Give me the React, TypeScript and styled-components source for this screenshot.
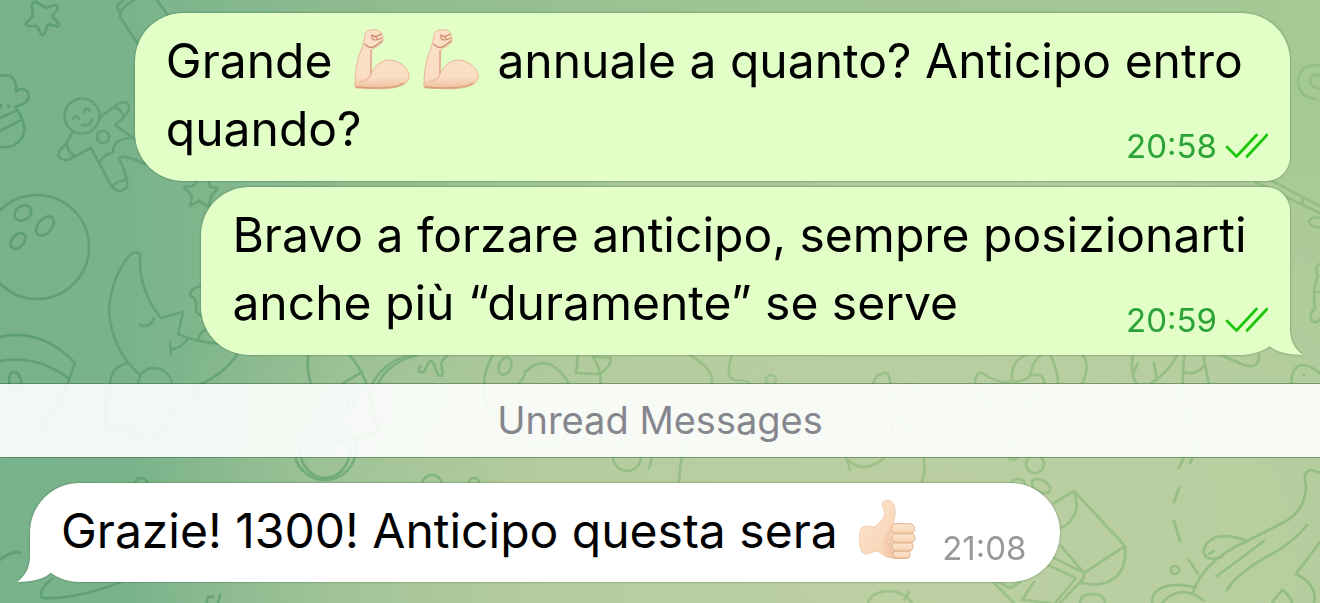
import React from "react";
import styled, { createGlobalStyle } from "styled-components";

const GlobalStyle = createGlobalStyle`
  * { box-sizing: border-box; }
  body { margin: 0; font-family: Inter, "Liberation Sans", sans-serif; }
`;

const Chat = styled.main`
  position: relative;
  min-height: 100vh;
  overflow: hidden;
  background:
    radial-gradient(ellipse 58% 92% at 68% 94%, rgba(190, 208, 163, 0.95), rgba(190, 208, 163, 0.72) 50%, rgba(190, 208, 163, 0) 100%),
    linear-gradient(90deg, #78b28b 0%, #7ab38b 10%, #8ebb8f 26%, #9cc392 50%, #a3c794 80%, #a5c995 100%);
`;

const Wallpaper = styled.svg`
  position: absolute;
  inset: 0;
  width: 100%;
  height: 100%;
  fill: none;
  stroke-width: 2.7;
  stroke-linecap: round;
  stroke-linejoin: round;
`;

const Thread = styled.div`
  position: relative;
  display: flex;
  flex-direction: column;
  padding: 13px 0 20px;
`;

const Group = styled.section<{ $side: "in" | "out" }>`
  display: flex;
  flex-direction: column;
  align-items: ${(p) => (p.$side === "out" ? "flex-end" : "flex-start")};
  gap: 6px;
  padding: 0 30px;
`;

const Bubble = styled.article<{ $corners: string }>`
  position: relative;
  border-radius: ${(p) => p.$corners};
  filter: drop-shadow(0 0 1px rgba(40, 90, 50, 0.6));
`;

const OutBubble = styled(Bubble)<{ $max: string }>`
  width: ${(p) => p.$max};
  padding: 14px 22px 18px 31px;
  background: #e1ffc7;
`;

const InBubble = styled(Bubble)`
  display: flex;
  align-items: flex-end;
  gap: 22px;
  padding: 14px 34px 17px 31px;
  background: #fff;
`;

const Message = styled.p`
  margin: 0;
  font-size: 48px;
  line-height: 68px;
  color: #000;
`;

const Meta = styled.span<{ $color: string }>`
  display: flex;
  align-items: center;
  gap: 8px;
  font-size: 33px;
  line-height: 34px;
  color: ${(p) => p.$color};
`;

const FloatingMeta = styled(Meta)`
  float: right;
  margin-top: 34px;
`;

const Ticks = styled.svg`
  width: 43px;
  height: 26px;
  fill: none;
  stroke: #1bc60c;
  stroke-width: 2.7;
  stroke-linecap: round;
  stroke-linejoin: round;
`;

const Tail = styled.svg<{ $side: "in" | "out" }>`
  position: absolute;
  bottom: 0;
  ${(p) => (p.$side === "out" ? "right: -14px;" : "left: -14px; transform: scaleX(-1);")}
  width: 62px;
  height: 48px;
  fill: ${(p) => (p.$side === "out" ? "#e1ffc7" : "#fff")};
`;

const Emoji = styled.svg`
  width: 58px;
  height: 62px;
  margin: 0 4px 0 7px;
  vertical-align: -12px;
`;

const UnreadBar = styled.h2`
  margin: 28px 0 25px;
  border: solid rgba(70, 115, 75, 0.6);
  border-width: 1px 0;
  background: rgba(255, 255, 255, 0.9);
  background-clip: padding-box;
  text-align: center;
  font-size: 38px;
  font-weight: 400;
  line-height: 73px;
  color: #86868e;
`;

function BubbleTail({ side }: { side: "in" | "out" }) {
  return (
    <Tail $side={side} viewBox="0 0 62 48" aria-hidden="true">
      <path d="M30 0H48V22C48 34 53 42 61 48C48 48 36 46 27.5 39.3Z" />
    </Tail>
  );
}

function Flexed() {
  return (
    <Emoji viewBox="0 0 58 62" role="img" aria-label="flexed biceps">
      <defs>
        <linearGradient id="arm" x1="0" y1="0" x2="0" y2="1">
          <stop offset="0" stopColor="#fbdfc6" />
          <stop offset="0.8" stopColor="#fadec4" />
          <stop offset="1" stopColor="#efbf9f" />
        </linearGradient>
      </defs>
      <path
        d="M12 8C12 4 14 2 19 2C22 1 27 2 28 5C30 6 29 9 30 11C31 14 26 18 21 20C18 21 19 23 18.500 27C18 34 18 41 17.500 47.500C21 39 27 32 36 32C46 32 56 40 56.300 48C56 55 49 58 42 59.500C34 61.500 16 60.500 4 60C2 60 1.500 58 2 55C2 47 3 39 5 31C7 24 10 19 10.500 15Z"
        fill="url(#arm)" stroke="#e5b090" strokeWidth="0.9" />
      <path d="M17.500 47.500C15 51 11 53 7 54" fill="none" stroke="#efc1a4" strokeWidth="1.500" />
      <path d="M18 22V45" fill="none" stroke="#e0a685" strokeWidth="1.400" />
      <path d="M19 7C22 10 25 8 28 6M19 7C18 10 20 12 22 12C25 12 27 11 29 10M22 8L24 11M12 16C15 20 19 20 22 18L29 13" fill="none" stroke="#c98a68" strokeWidth="1.200" strokeLinecap="round" />
      <path d="M3 59C20 60.500 42 61 51 55" fill="none" stroke="#d99b78" strokeWidth="1.500" />
    </Emoji>
  );
}

function ThumbsUp() {
  return (
    <Emoji viewBox="0 0 60 62" role="img" aria-label="thumbs up">
      <defs>
        <linearGradient id="hand" x1="0" y1="0" x2="1" y2="1">
          <stop offset="0.2" stopColor="#fce2c8" />
          <stop offset="0.7" stopColor="#f8d5b8" />
          <stop offset="1" stopColor="#ecb998" />
        </linearGradient>
        <linearGradient id="finger" x1="0" y1="0" x2="0" y2="1">
          <stop offset="0" stopColor="#fce4cd" />
          <stop offset="0.7" stopColor="#f9dabd" />
          <stop offset="1" stopColor="#eebf9c" />
        </linearGradient>
      </defs>
      <path
        d="M25 5C25 2 28 1 31 1C37 2 39 9 38.500 15C38 20 36 23 38 27L48 30V61C42 62 35 61.500 30 60C25 58 23 54 18 54C15 54 12 57 8 57C3 57 1 48 1.500 39C1.800 31 4 28 8 28C12 28 15 30 19 28C22 24 27 21 27.500 15C27.600 11 25 9 25 5Z"
        fill="url(#hand)" stroke="#edc1a2" strokeWidth="0.7" />
      <path d="M37 28C31 34 34 42 35 49C35 55 37 58 39 60C32 58 28 53 26 47C28 38 31 30 37 28Z" fill="#f2c5a6" opacity="0.6" />
      <g fill="url(#finger)" stroke="#dfa886" strokeWidth="0.9">
        <rect x="36" y="53" width="18" height="8.500" rx="4" />
        <rect x="35" y="44.500" width="22" height="9.500" rx="4.500" />
        <rect x="35" y="35" width="24" height="10.500" rx="5" />
        <rect x="34" y="25.500" width="24.500" height="10.500" rx="5" />
      </g>
    </Emoji>
  );
}

function DoubleCheck() {
  return (
    <Ticks viewBox="0 0 43 26" role="img" aria-label="Read">
      <path d="M2 14L11.500 23.500L31.500 2M22 23.500L42 2" />
    </Ticks>
  );
}

const doodles = [
  // star and tumbler
  "M36 2L46 8L54 5Q59 5 57 10L52 16L59 24Q60 27 56 26L48 24L45 33Q42 37 40 32L37 26L28 26Q24 25 27 22L33 16L32 5Q33 1 36 2Z",
  "M124 0Q115 6 118 9L121 13M134 0Q118 9 120 17L140 47M157 0L170 18",
  // snowman
  "M0 76Q14 72 16 86L16 92Q21 86 27 91Q32 99 23 104L15 107Q29 126 22 138Q14 149 0 147M0 118L18 110M0 131L21 120M1 105V107M8 105L9 107",
  // gingerbread man
  "M73 119Q76 113 79 119M84 112Q86 105 90 111M82 125Q90 127 92 120M99 118L118 104Q128 99 129 107Q130 113 115 125L136 140M114 107Q123 110 124 118M72 132Q69 142 60 150Q55 160 68 160L91 148L112 187Q120 195 127 187Q129 180 119 158Q124 154 145 164M67 144Q68 154 76 156M100 162Q103 155 113 152Q113 138 133 138M114 185Q117 181 126 180",
  "M209 181L210 187L218 188L211 196L209 207L199 201L190 206L192 196L184 187L193 186L197 181",
  // moon with night cap
  "M140 254Q135 250 129 256Q110 280 109 312Q112 350 140 375M140 254Q138 290 161 318L183 312L178 334Q195 342 222 344M140 325Q150 329 154 318M170 342L171 354M171 349Q180 349 187 340M238 353Q222 378 190 388M127 363Q110 368 110 385Q98 420 112 428Q128 432 140 428M138 384Q140 368 155 368Q170 370 172 384M125 420Q125 440 150 440Q170 438 168 412Q185 410 206 382",
  "M201 286Q190 288 190 296Q198 298 196 312L201 316M198 340Q200 332 206 329",
  // watermelon
  "M0 337Q40 327 75 363L66 388Q55 410 40 430M0 361Q38 355 68 378",
  "M0 560Q12 550 20 553M52 579Q38 590 42 598Q75 600 124 581M207 603Q206 595 213 597M218 603L220 595",
  // parrot
  "M308 352Q306 378 315 395L330 445M349 354Q362 370 367 385L378 430M362 372L342 384M315 440Q350 446 380 430",
  // doughnut
  "M372 384Q385 360 414 354M378 384Q388 362 418 355M420 366Q416 375 425 371Q430 355 434 364Q438 380 443 374L441 363Q445 357 448 355",
  // cookie
  "M493 355Q478 378 488 410Q543 480 595 410Q608 378 592 355M518 384Q525 378 525 372Q548 350 568 382M578 355L576 373L600 374Q612 365 611 358L594 357M650 455Q653 460 649 468",
  "M690 355Q712 368 712 380L708 398M732 355Q724 378 735 380Q748 380 750 384",
  "M679 482Q682 400 750 402Q835 410 850 470M873 384Q876 372 888 373Q900 420 884 452M892 400Q905 380 918 386Q915 410 900 418Q932 450 922 482M848 460Q864 475 884 458",
  // fruit bowl
  "M975 384Q975 372 982 373Q1000 385 1012 381Q1020 384 1032 375Q1045 373 1044 384Q1035 410 1005 410Q980 410 975 384M1012 381Q1010 360 1028 354M1030 376Q1032 362 1042 354M1050 354Q1058 370 1058 384M1082 354Q1092 366 1080 388",
  "M1133 354Q1130 375 1137 384M1178 354Q1168 373 1150 384M1138 363L1134 372M1154 363L1157 380M1185 354Q1182 370 1183 400L1198 455M1203 354L1209 384M1183 372Q1196 376 1204 366M1218 354L1244 365Q1259 370 1259 355",
  "M1291 384Q1292 366 1302 365Q1312 366 1320 373M1304 374V375",
  // spiral, stick and turtle
  "M1316 99Q1298 97 1298 81Q1300 65 1316 65L1320 66M1320 89Q1310 88 1310 80Q1312 73 1320 76M1255 182L1320 213M1270 180L1320 206M1303 197L1302 204M1320 218Q1310 216 1309 222Q1311 228 1320 227M1320 264Q1313 268 1318 276Q1312 290 1315 308Q1308 315 1312 321Q1316 324 1320 319M1316 292H1320",
  // milk carton
  "M1054 503L1074 491L1125 546Q1128 575 1105 583Q1095 586 1083 583M1074 491Q1080 510 1072 518Q1068 526 1060 528M1061 546L1084 573L1125 546M1084 573Q1084 580 1080 584M1054 558L1084 573M1048 565L1076 578L1055 603M1060 603L1082 580M1080 603Q1080 594 1092 594Q1104 594 1105 603M993 582L1014 603M998 582L1010 588L1020 582M1022 600L1034 582M1022 600L1050 603",
  "M1184 457L1179 468M1179 488L1174 502M1174 521L1180 541M1189 560L1198 574M1193 457L1190 463",
  // dinosaur
  "M1193 592Q1205 560 1245 542L1288 520Q1306 508 1306 485Q1302 470 1312 470L1320 473M1217 576L1264 541M1227 590Q1238 572 1272 554Q1294 542 1307 525M1247 541Q1230 534 1216 537Q1203 543 1204 553Q1207 562 1222 557M1209 554L1214 551M1152 603Q1152 584 1182 585L1196 587M1162 603Q1180 583 1203 600M1320 542L1296 574Q1318 585 1314 603M1272 603L1282 590Q1290 595 1292 603",
  "M868 603Q872 591 890 591Q905 592 912 603M909 592L904 600",
];

const rings: [number, number, number, number, number][] = [
  [82, 116, 17.5, 17.5, 0], [103, 137, 6, 6, 0], [37, 247, 52, 52, 0],
  [23, 213, 9, 7, -35], [45, 226, 11, 7, -50], [18, 241, 9, 6, -50],
  [15, 381, 6, 9, -10], [141, 485, 7, 7, 0], [343, 403, 11, 11, 0], [343, 403, 6, 6, 0],
  [325, 449, 31, 31, 0], [325, 449, 25, 29, 0], [505, 366, 6, 9, 20],
  [627, 457, 14, 14, 0], [432, 485, 10, 10, 0], [474, 483, 5, 5, 0],
  [771, 380, 5, 5, 0], [1010, 451, 6, 10, -35], [1035, 464, 9, 9, 0], [1041, 486, 10, 6, 30],
  [1018, 484, 7, 5, 0], [1175, 570, 4, 4, 0],
];

function Pattern() {
  return (
    <Wallpaper viewBox="0 0 1320 603" preserveAspectRatio="xMidYMid slice" aria-hidden="true">
      <defs>
        <linearGradient id="ink" gradientUnits="userSpaceOnUse" x1="0" y1="0" x2="1320" y2="0">
          <stop offset="0" stopColor="#5c9f75" />
          <stop offset="0.2" stopColor="#6aa679" />
          <stop offset="0.4" stopColor="#8ebb82" />
          <stop offset="0.6" stopColor="#9fc28a" />
          <stop offset="1" stopColor="#93bd82" />
        </linearGradient>
      </defs>
      <g stroke="url(#ink)">
        {doodles.map((d) => <path key={d} d={d} />)}
        {rings.map(([x, y, rx, ry, turn], i) => (
          <ellipse key={i} cx={x} cy={y} rx={rx} ry={ry} transform={`rotate(${turn} ${x} ${y})`} />
        ))}
      </g>
    </Wallpaper>
  );
}

export default function App() {
  return (
    <Chat>
      <GlobalStyle />
      <Pattern />
      <Thread>
        <Group $side="out">
          <OutBubble $max="calc(92% - 4px)" $corners="48px 48px 24px 48px">
            <Message>
              Grande <Flexed /><Flexed /> annuale a quanto? Anticipo entro quando?
              <FloatingMeta $color="#2ca336"><time>20:58</time><DoubleCheck /></FloatingMeta>
            </Message>
          </OutBubble>
          <OutBubble $max="calc(86% + 5px)" $corners="48px 24px 48px 48px">
            <Message>
              Bravo a forzare anticipo, sempre posizionarti anche più “duramente” se serve
              <FloatingMeta $color="#2ca336"><time>20:59</time><DoubleCheck /></FloatingMeta>
            </Message>
            <BubbleTail side="out" />
          </OutBubble>
        </Group>
        <UnreadBar>Unread Messages</UnreadBar>
        <Group $side="in">
          <InBubble $corners="50px">
            <Message>Grazie! 1300! Anticipo questa sera <ThumbsUp /></Message>
            <Meta $color="#999"><time>21:08</time></Meta>
            <BubbleTail side="in" />
          </InBubble>
        </Group>
      </Thread>
    </Chat>
  );
}
